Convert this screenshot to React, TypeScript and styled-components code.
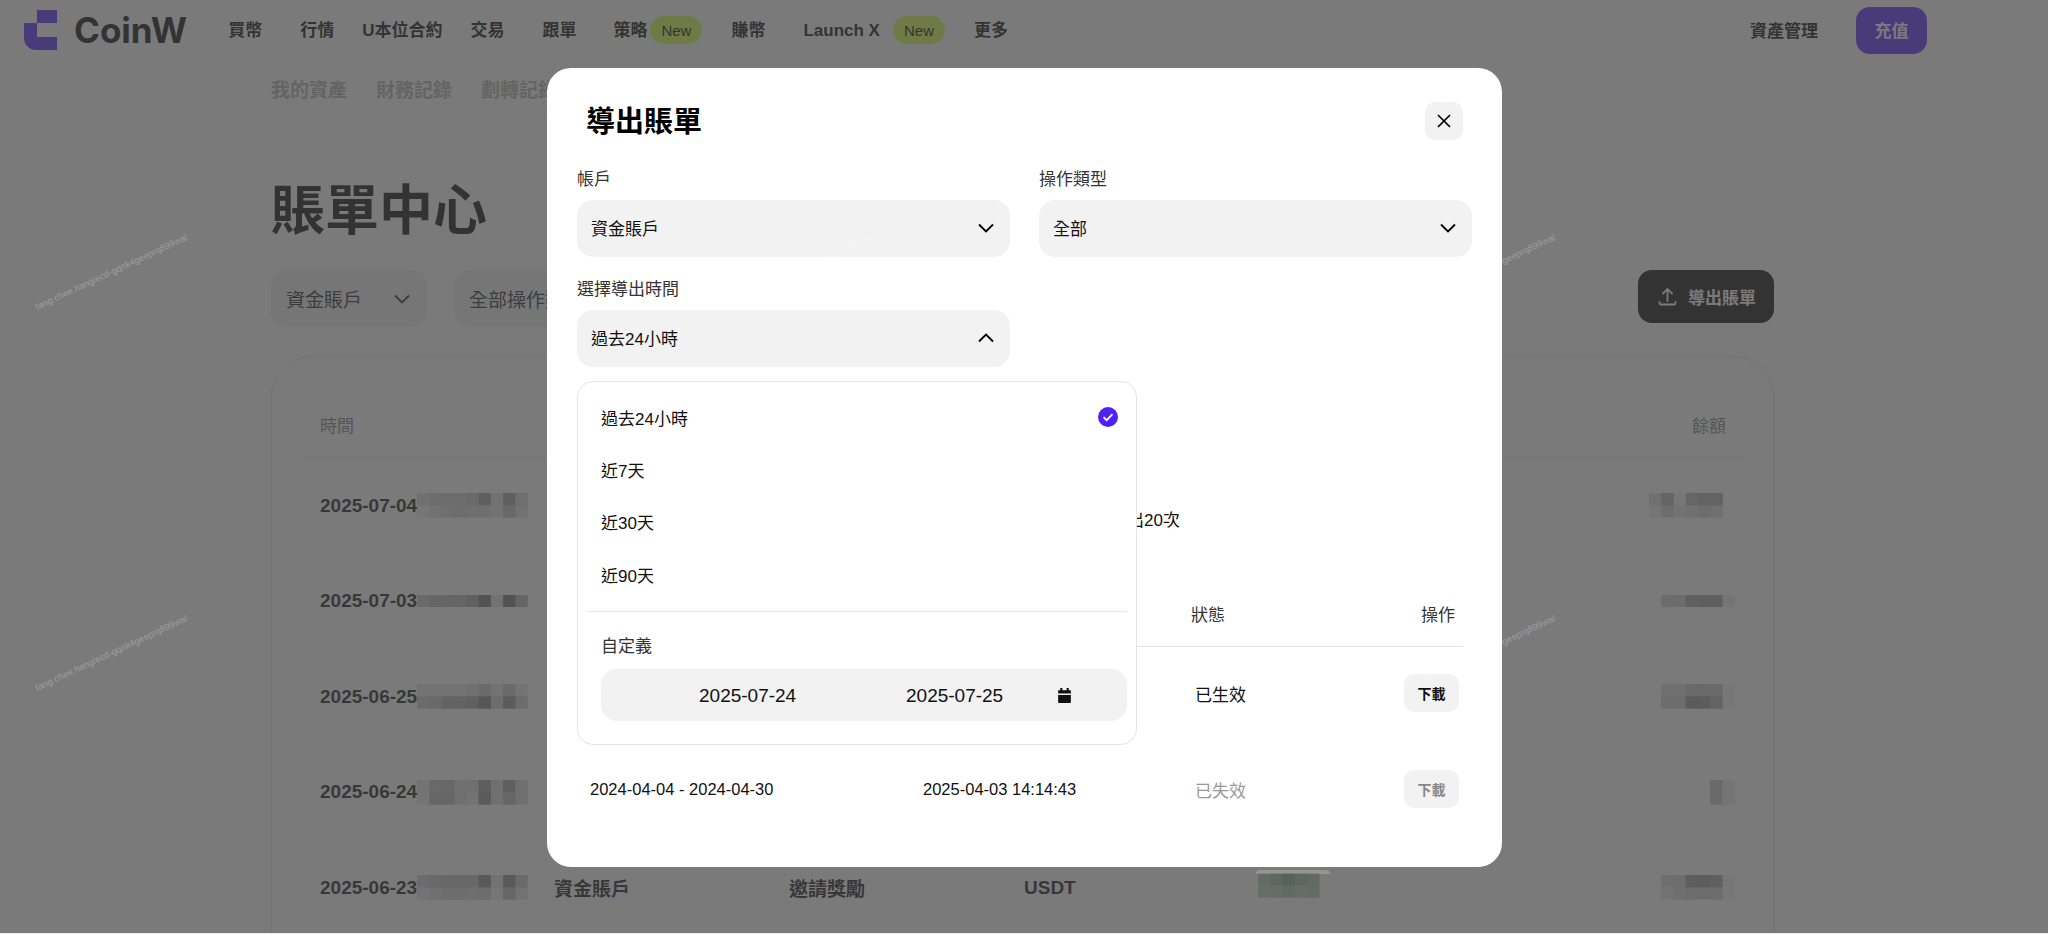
import { createGlobalStyle, styled } from "styled-components";

const FONT = `"Liberation Sans", "Noto Sans CJK TC", sans-serif`;

const GlobalStyle = createGlobalStyle`
  html, body {
    margin: 0;
    padding: 0;
    background: #ececec;
    overflow: hidden;
    font-family: ${FONT};
  }
  * {
    box-sizing: border-box;
  }
`;

const Page = styled.div`
  position: relative;
  width: 2048px;
  height: 933px;
  background: #fff;
  overflow: hidden;
`;

/* ---------- top bar ---------- */
const TopBar = styled.header`
  display: flex;
  align-items: center;
  height: 60px;
  padding: 0 121px 0 24px;
`;

const LogoText = styled.span`
  margin: 0 41px 0 17px;
  font-family: Inter, "Liberation Sans", sans-serif;
  font-size: 35px;
  font-weight: 700;
  color: #000;
`;

const NavList = styled.nav`
  display: flex;
  align-items: center;
  flex: 1;
`;

const NavItem = styled.span<{ $gap?: number }>`
  margin-right: ${(props) => props.$gap ?? 38}px;
  padding-top: 1px;
  font-size: 17px;
  line-height: 24px;
  font-weight: 700;
  color: #000;
  white-space: nowrap;
`;

const NewBadge = styled.span<{ $gap?: number }>`
  display: inline-flex;
  align-items: center;
  justify-content: center;
  width: 52px;
  height: 28px;
  margin-right: ${(props) => props.$gap ?? 29}px;
  border-radius: 14px;
  background: #d8ff45;
  font-size: 15px;
  color: #000;
`;

const AssetLink = styled.span`
  margin-right: 38px;
  padding-bottom: 2px;
  font-size: 17px;
  font-weight: 700;
  color: #000;
`;

const DepositButton = styled.button`
  width: 71px;
  height: 47px;
  padding: 0 0 2px;
  border: 0;
  border-radius: 14px;
  background: #4f1cff;
  color: #fff;
  font-family: ${FONT};
  font-size: 17px;
  font-weight: 700;
`;

const SubNav = styled.div`
  display: flex;
  gap: 29px;
  height: 53px;
  padding: 19px 0 0 271px;
  border-bottom: 1px solid #f0f0f0;
`;

const SubNavItem = styled.span`
  font-size: 19px;
  font-weight: 700;
  line-height: 24px;
  color: #b0b0b0;
`;

/* ---------- bill page ---------- */
const Content = styled.main`
  width: 1503px;
  margin-left: 271px;
`;

const PageTitle = styled.h1`
  margin: 66px 0 0;
  font-size: 54px;
  line-height: 64px;
  font-weight: 700;
  color: #000;
`;

const FilterRow = styled.div`
  display: flex;
  align-items: flex-start;
  gap: 27px;
  margin-top: 27px;
`;

const FilterBox = styled.div<{ $width: number }>`
  display: flex;
  align-items: center;
  justify-content: space-between;
  width: ${(props) => props.$width}px;
  height: 57px;
  padding: 0 17px 0 15px;
  border-radius: 16px;
  background: #efefef;
  font-size: 19px;
  color: #222;
`;

const ExportButton = styled.button`
  display: flex;
  align-items: center;
  gap: 11px;
  width: 136px;
  height: 53px;
  margin-left: auto;
  padding: 0 0 0 20px;
  border: 0;
  border-radius: 14px;
  background: #000;
  color: #fff;
  font-family: ${FONT};
  font-size: 17px;
  font-weight: 700;
`;

const BillCard = styled.section`
  height: 640px;
  margin-top: 29px;
  padding: 0 29px;
  border: 1px solid #e6e6e6;
  border-radius: 40px;
`;

const BillHeader = styled.div`
  display: flex;
  justify-content: space-between;
  height: 101px;
  padding: 58px 18px 0 19px;
  border-bottom: 1px solid #e6e6e6;
  font-size: 17px;
  line-height: 24px;
  color: #7c7c7c;
`;

const BillRow = styled.div`
  display: grid;
  grid-template-columns: 234px 235px 235px 234px 1fr auto;
  align-items: center;
  height: 95.5px;
  padding: 0 9px 0 19px;
  font-size: 19px;
  font-weight: 700;
  color: #111;
`;

const BillDate = styled.div`
  display: flex;
  align-items: center;
`;

/* ---------- overlay + modal ---------- */
const Overlay = styled.div`
  position: absolute;
  inset: 0;
  background: rgba(71, 71, 71, 0.72);
`;

const Smear = styled.div`
  position: absolute;
  top: 870px;
  left: 1256px;
  width: 74px;
  height: 4px;
  border-radius: 4px 4px 0 0;
  background: rgba(255, 255, 255, 0.2);
`;

const Modal = styled.div`
  position: absolute;
  top: 68px;
  left: 547px;
  width: 955px;
  height: 799px;
  padding: 33px 30px 0;
  border-radius: 24px;
  background: #fff;
`;

const ModalHead = styled.div`
  display: flex;
  align-items: center;
  justify-content: space-between;
  padding: 0 9px 0 9px;
`;

const ModalTitle = styled.h2`
  margin: 0;
  padding-top: 2px;
  font-size: 29px;
  line-height: 38px;
  font-weight: 700;
  color: #000;
`;

const CloseButton = styled.button`
  display: flex;
  align-items: center;
  justify-content: center;
  width: 38px;
  height: 38px;
  padding: 0;
  border: 0;
  border-radius: 10px;
  background: #f2f2f2;
`;

const FormGrid = styled.div`
  display: grid;
  grid-template-columns: 433px 433px;
  column-gap: 29px;
  row-gap: 20px;
  margin-top: 26px;
`;

const Field = styled.div`
  position: relative;
`;

const FieldLabel = styled.div`
  height: 22px;
  margin-bottom: 11px;
  padding-top: 2px;
  font-size: 17px;
  line-height: 22px;
  color: #333;
`;

const SelectBox = styled.div`
  display: flex;
  align-items: center;
  justify-content: space-between;
  height: 57px;
  padding: 0 16px 2px 14px;
  border-radius: 16px;
  background: #f2f2f2;
  font-size: 17px;
  color: #111;
`;

const Dropdown = styled.div`
  position: absolute;
  top: 104px;
  left: 0;
  z-index: 2;
  width: 560px;
  height: 364px;
  padding: 9px 9px 0;
  border: 1px solid #e4e4e4;
  border-radius: 16px;
  background: #fff;
`;

const Option = styled.div`
  display: flex;
  align-items: center;
  justify-content: space-between;
  height: 52.3px;
  padding: 0 9px 0 14px;
  font-size: 17px;
  color: #111;
`;

const DropdownDivider = styled.div`
  height: 1px;
  margin-top: 11px;
  background: #e6e6e6;
`;

const CustomLabel = styled.div`
  margin: 24px 0 11px 14px;
  font-size: 17px;
  line-height: 22px;
  color: #333;
`;

const DateBox = styled.div`
  display: flex;
  align-items: center;
  height: 52px;
  margin-left: 14px;
  padding: 1px 0 0 98px;
  border-radius: 16px;
  background: #f2f2f2;
  font-size: 19px;
  color: #111;
`;

const DateValue = styled.span`
  width: 98px;
  white-space: nowrap;
`;

const DateGap = styled.span<{ $width: number }>`
  display: block;
  width: ${(props) => props.$width}px;
`;

const LimitNote = styled.div`
  margin: 143px 0 0 550px;
  font-size: 17px;
  line-height: 22px;
  color: #111;
`;

const ExportHead = styled.div`
  display: grid;
  grid-template-columns: 601px 1fr auto;
  height: 53px;
  margin: 62px 0 -2px;
  padding: 11px 8px 0 13px;
  border-bottom: 1px solid #e4e4e4;
  width: 886px;
  font-size: 17px;
  line-height: 22px;
  color: #333;
`;

const ExportRow = styled.div`
  display: grid;
  grid-template-columns: 333px 272px 1fr auto;
  align-items: center;
  height: 96px;
  width: 886px;
  padding: 0 4px 0 13px;
  font-size: 16.5px;
  color: #111;
`;

const StatusText = styled.span<{ $expired?: boolean }>`
  font-size: 17px;
  color: ${(props) => (props.$expired ? "#999" : "#111")};
`;

const DownloadButton = styled.button<{ $expired?: boolean }>`
  width: 55px;
  height: 38px;
  padding: 0;
  border: 0;
  border-radius: 10px;
  background: #f2f2f2;
  font-family: ${FONT};
  font-size: 14px;
  font-weight: 700;
  color: ${(props) => (props.$expired ? "#888" : "#111")};
`;

/* ---------- watermark ---------- */
const WatermarkLayer = styled.div`
  position: absolute;
  top: 81px;
  left: -231px;
  display: grid;
  grid-template-columns: repeat(3, 684px);
  grid-auto-rows: 381px;
  place-items: center;
  pointer-events: none;
`;

const WatermarkText = styled.span`
  font-size: 9.2px;
  white-space: nowrap;
  color: rgba(255, 255, 255, 0.28);
  transform: rotate(-25deg);
`;

/* ---------- drawings ---------- */
const Logo = () => (
  <svg width="33" height="40" viewBox="0 0 33 40" fill="#4f1cff">
    <path d="M13 0h20v13H13z" />
    <path d="M0 13h13v14h20v13H12A12 12 0 0 1 0 28z" />
  </svg>
);

const Chevron = ({ up, color = "#000" }: { up?: boolean; color?: string }) => (
  <svg width="16" height="10" viewBox="0 0 16 10" fill="none" stroke={color} strokeWidth="1.8">
    <path d={up ? "M1 8.5l7-7 7 7" : "M1 1.5l7 7 7-7"} />
  </svg>
);

const CloseIcon = () => (
  <svg width="14" height="14" viewBox="0 0 14 14" fill="none" stroke="#000" strokeWidth="1.7">
    <path d="M1 1l12 12M13 1L1 13" />
  </svg>
);

const CheckIcon = () => (
  <svg width="20" height="20" viewBox="0 0 20 20">
    <circle cx="10" cy="10" r="10" fill="#5020f5" />
    <path d="M5.5 10.2l3.2 3 5.8-6" fill="none" stroke="#fff" strokeWidth="1.8" />
  </svg>
);

const CalendarIcon = () => (
  <svg width="17" height="17" viewBox="0 0 16 16" fill="#111">
    <path d="M4 1h2v2h4V1h2v2h1.5A.5.5 0 0 1 14 3.5V6H2V3.5a.5.5 0 0 1 .5-.5H4z" />
    <path d="M2 7.5h12V14a1 1 0 0 1-1 1H3a1 1 0 0 1-1-1z" />
  </svg>
);

const UploadIcon = () => (
  <svg width="19" height="19" viewBox="0 0 19 19" fill="none" stroke="#fff" strokeWidth="1.8" strokeLinecap="round">
    <path d="M9.5 14V2.5M5 6.5l4.5-4.5L14 6.5" />
    <path d="M1.5 15v1a1.5 1.5 0 0 0 1.5 1.5h13a1.5 1.5 0 0 0 1.5-1.5v-1" />
  </svg>
);

// pixelated blur that hides the amounts; each number is the strength of one 12px cell
const Mosaic = ({ cells, color = "#000" }: { cells: number[][]; color?: string }) => (
  <svg width={cells[0].length * 12.3} height={cells.length * 12.3}>
    {cells.map((row, y) =>
      row.map((o, x) => (
        <rect key={`${x}-${y}`} x={x * 12.3} y={y * 12.3} width="12.4" height="12.4" fill={color} opacity={o} />
      )),
    )}
  </svg>
);

const bills = [
  {
    date: "2025-07-04",
    left: [[0.14, 0.18, 0.2, 0.2, 0.22, 0.38, 0.12, 0.38, 0.16], [0.06, 0.12, 0.16, 0.18, 0.16, 0.16, 0.1, 0.24, 0.12]],
    right: [[0.14, 0.3, 0.04, 0.28, 0.32, 0.32, 0], [0.08, 0.18, 0.1, 0.14, 0.18, 0.14, 0]],
  },
  {
    date: "2025-07-03",
    left: [[0.22, 0.28, 0.3, 0.3, 0.36, 0.54, 0.12, 0.56, 0.3]],
    right: [[0.18, 0.2, 0.36, 0.4, 0.38, 0.08]],
  },
  {
    date: "2025-06-25",
    left: [[0.1, 0.1, 0.1, 0.1, 0.14, 0.22, 0.1, 0.22, 0.1], [0.2, 0.22, 0.32, 0.32, 0.36, 0.5, 0.18, 0.42, 0.2]],
    right: [[0.14, 0.14, 0.22, 0.22, 0.22, 0.04], [0.18, 0.18, 0.42, 0.42, 0.32, 0.04]],
  },
  {
    date: "2025-06-24",
    left: [[0.1, 0.24, 0.26, 0.16, 0.16, 0.4, 0.14, 0.38, 0.16], [0.08, 0.28, 0.28, 0.16, 0.1, 0.44, 0.14, 0.28, 0.16]],
    right: [[0.22, 0.08], [0.22, 0.08]],
  },
  {
    date: "2025-06-23",
    left: [[0.2, 0.24, 0.26, 0.26, 0.26, 0.46, 0.12, 0.46, 0.22], [0.1, 0.14, 0.18, 0.18, 0.16, 0.18, 0.08, 0.28, 0.12]],
    right: [[0.16, 0.18, 0.4, 0.42, 0.36, 0.04], [0.1, 0.16, 0.2, 0.2, 0.2, 0.04]],
    account: "資金賬戶",
    action: "邀請獎勵",
    coin: "USDT",
    amount: [
      [0.4, 0.5, 0.62, 0.5, 0.44],
      [0.32, 0.38, 0.42, 0.36, 0.4],
    ],
  },
];

const navItems: [string, number][] = [
  ["買幣", 38],
  ["行情", 28],
  ["U本位合約", 28],
  ["交易", 38],
  ["跟單", 37],
];
const rangeOptions = ["過去24小時", "近7天", "近30天", "近90天"];
const watermarks = Array.from({ length: 6 }, (_, i) => i);

export default function App() {
  return (
    <>
      <GlobalStyle />
      <Page>
        <TopBar>
          <Logo />
          <LogoText>CoinW</LogoText>
          <NavList>
            {navItems.map(([item, gap]) => (
              <NavItem key={item} $gap={gap}>
                {item}
              </NavItem>
            ))}
            <NavItem $gap={3}>策略</NavItem>
            <NewBadge>New</NewBadge>
            <NavItem>賺幣</NavItem>
            <NavItem $gap={13}>Launch X</NavItem>
            <NewBadge>New</NewBadge>
            <NavItem>更多</NavItem>
          </NavList>
          <AssetLink>資產管理</AssetLink>
          <DepositButton>充值</DepositButton>
        </TopBar>
        <SubNav>
          <SubNavItem>我的資產</SubNavItem>
          <SubNavItem>財務記錄</SubNavItem>
          <SubNavItem>劃轉記錄</SubNavItem>
        </SubNav>
        <Content>
          <PageTitle>賬單中心</PageTitle>
          <FilterRow>
            <FilterBox $width={156}>
              資金賬戶
              <Chevron color="#222" />
            </FilterBox>
            <FilterBox $width={190}>
              全部操作類型
              <Chevron color="#222" />
            </FilterBox>
            <ExportButton>
              <UploadIcon />
              導出賬單
            </ExportButton>
          </FilterRow>
          <BillCard>
            <BillHeader>
              <span>時間</span>
              <span>餘額</span>
            </BillHeader>
            {bills.map((bill) => (
              <BillRow key={bill.date}>
                <BillDate>
                  {bill.date}
                  <Mosaic cells={bill.left} />
                </BillDate>
                <span>{bill.account}</span>
                <span>{bill.action}</span>
                <span>{bill.coin}</span>
                <span>{bill.amount && <Mosaic cells={bill.amount} color="#2a7a45" />}</span>
                <Mosaic cells={bill.right} />
              </BillRow>
            ))}
          </BillCard>
        </Content>

        <Overlay />
        <Smear />

        <Modal>
          <ModalHead>
            <ModalTitle>導出賬單</ModalTitle>
            <CloseButton>
              <CloseIcon />
            </CloseButton>
          </ModalHead>
          <FormGrid>
            <Field>
              <FieldLabel>帳戶</FieldLabel>
              <SelectBox>
                資金賬戶
                <Chevron />
              </SelectBox>
            </Field>
            <Field>
              <FieldLabel>操作類型</FieldLabel>
              <SelectBox>
                全部
                <Chevron />
              </SelectBox>
            </Field>
            <Field>
              <FieldLabel>選擇導出時間</FieldLabel>
              <SelectBox>
                過去24小時
                <Chevron up />
              </SelectBox>
              <Dropdown>
                {rangeOptions.map((option, i) => (
                  <Option key={option}>
                    {option}
                    {i === 0 && <CheckIcon />}
                  </Option>
                ))}
                <DropdownDivider />
                <CustomLabel>自定義</CustomLabel>
                <DateBox>
                  <DateValue>2025-07-24</DateValue>
                  <DateGap $width={109} />
                  <DateValue>2025-07-25</DateValue>
                  <DateGap $width={52} />
                  <CalendarIcon />
                </DateBox>
              </Dropdown>
            </Field>
          </FormGrid>
          <LimitNote>出20次</LimitNote>
          <ExportHead>
            <span />
            <span>狀態</span>
            <span>操作</span>
          </ExportHead>
          <ExportRow>
            <span />
            <span />
            <StatusText>已生效</StatusText>
            <DownloadButton>下載</DownloadButton>
          </ExportRow>
          <ExportRow>
            <span>2024-04-04 - 2024-04-30</span>
            <span>2025-04-03 14:14:43</span>
            <StatusText $expired>已失效</StatusText>
            <DownloadButton $expired>下載</DownloadButton>
          </ExportRow>
        </Modal>

        <WatermarkLayer>
          {watermarks.map((i) => (
            <WatermarkText key={i}>tang.chee.hang/ecd-gqnk4geeprq899wal</WatermarkText>
          ))}
        </WatermarkLayer>
      </Page>
    </>
  );
}
